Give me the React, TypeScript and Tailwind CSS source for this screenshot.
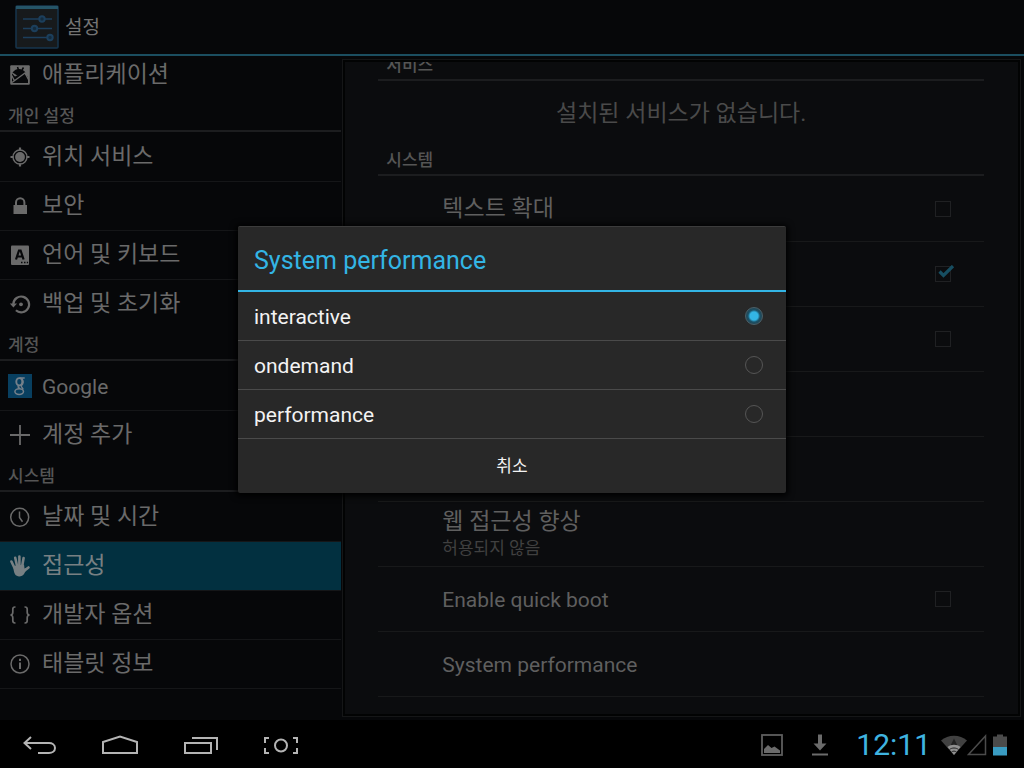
import type { ReactNode } from "react";

const FONT = "font-['Roboto','Noto_Sans_CJK_KR',sans-serif]";

function Svg({ children }: { children: ReactNode }) {
  return (
    <svg viewBox="0 0 24 24" className="size-6 shrink-0" fill="none" stroke="currentColor" strokeWidth="1.5" aria-hidden="true">
      {children}
    </svg>
  );
}

const icons = {
  apps: (
    <Svg>
      <rect x="2.2" y="2.2" width="19.6" height="19.6" rx="1" fill="currentColor" stroke="none" />
      <path d="M4 10.500 7 13.500 15.500 9.500 20 14v6H4z" fill="#07080a" stroke="none" />
      <path d="M4.500 9.500C6.500 7 8.500 6 11 6s5 1.500 6.500 3.500L10 13z" fill="#07080a" stroke="none" />
      <path d="M9.500 4 10.500 7M15.500 4.500 14 7" stroke="#07080a" />
      <path d="M4 19.500 17 10l4 7.500M3.800 12.500l2.700 5.500" strokeWidth="1.400" />
    </Svg>
  ),
  location: (
    <Svg>
      <circle cx="12" cy="12" r="4.900" fill="currentColor" stroke="none" />
      <circle cx="12" cy="12" r="7" strokeWidth="1.400" />
      <path d="M12 2.500v3M12 18.500v3M2.500 12h3M18.500 12h3" strokeWidth="2.200" />
    </Svg>
  ),
  lock: (
    <Svg>
      <rect x="5.500" y="11" width="13.500" height="9" fill="currentColor" stroke="none" />
      <path d="M8 11.500V8.500a4.200 4.200 0 0 1 8.400 0v3" strokeWidth="2" />
    </Svg>
  ),
  language: (
    <Svg>
      <rect x="3" y="2.500" width="18" height="19.500" rx="1" fill="currentColor" stroke="none" />
      <path d="M8 16.500 11 7.500h1.600l3 9M9.300 13.500h5" stroke="#07080a" strokeWidth="2.200" />
      <path d="M13 19.500h1.500M16 19.500h1.500M18.800 19.500h1.300" stroke="#07080a" strokeWidth="1.600" />
    </Svg>
  ),
  backup: (
    <Svg>
      <path d="M5.300 12a7.900 7.900 0 1 1 2.600 6.300" strokeWidth="2.200" />
      <path d="M1.800 11.500h7.200l-3.600 4z" fill="currentColor" stroke="none" />
      <circle cx="13" cy="12.300" r="1.900" fill="currentColor" stroke="none" />
    </Svg>
  ),
  google: (
    <Svg>
      <rect width="24" height="24" fill="#083f60" stroke="none" />
      <g stroke="#75808a">
        <ellipse cx="11.300" cy="7.800" rx="3" ry="3.700" strokeWidth="1.900" />
        <ellipse cx="11.200" cy="17.600" rx="4.300" ry="2.900" strokeWidth="1.500" />
        <path d="M11.500 4h5.200M14 5c1.800 2.500 1 5-.5 6.500-1 1.200 1 2 1.700 4M11 11.300c-2 1.200-.5 2.500 1 3.200" strokeWidth="1.400" />
      </g>
    </Svg>
  ),
  add: (
    <Svg>
      <path d="M12 2v20M2 12h20" strokeWidth="1.800" />
    </Svg>
  ),
  clock: (
    <Svg>
      <circle cx="11.700" cy="12.300" r="9" strokeWidth="1.500" />
      <path d="M11.500 6.500v6l3 4.300" strokeWidth="1.500" />
    </Svg>
  ),
  hand: (
    <Svg>
      <g strokeLinecap="round" strokeWidth="2.600">
        <path d="M3.400 7.500 7 15M7.200 3.800 9.300 13M11.400 2.500V13M15.600 4 14 13M20.500 13.500 16 17" />
      </g>
      <path d="M5.500 12 16 10.500l.5 4 3-1-3.500 6.500c-1.500 2.700-7 3.500-9 .3-1.200-2-1.500-5-1.500-8.300z" fill="currentColor" stroke="none" />
    </Svg>
  ),
  braces: (
    <Svg>
      <path d="M7.500 4H7c-1.700 0-2.200.8-2.200 2.200v3c0 1.700-.6 2.600-2.300 2.800 1.700.2 2.300 1.100 2.300 2.800v3c0 1.400.5 2.200 2.200 2.200h.5M16.500 4h.5c1.700 0 2.200.8 2.200 2.200v3c0 1.700.6 2.600 2.300 2.800-1.700.2-2.300 1.100-2.300 2.800v3c0 1.400-.5 2.200-2.200 2.200h-.5" strokeWidth="1.700" />
    </Svg>
  ),
  info: (
    <Svg>
      <circle cx="12" cy="12" r="9" strokeWidth="1.500" />
      <path d="M12 10.500v6.500M12 6.800v2.200" strokeWidth="2" />
    </Svg>
  ),
};

function Category({ children }: { children: ReactNode }) {
  return (
    <div className="h-[33px] shrink-0 pb-px">
      <h2 className="flex h-8 items-center border-b-2 border-[#1c1d1f] px-2 pt-1 text-[17px] font-medium text-[#555555]">{children}</h2>
    </div>
  );
}

type ItemProps = { icon: keyof typeof icons; label: string; last?: boolean; active?: boolean; latin?: boolean };

function NavItem({ icon, label, last, active, latin }: ItemProps) {
  return (
    <a
      href="#"
      aria-current={active ? "page" : undefined}
      className={`flex h-[49px] shrink-0 items-center gap-2.5 border-b pl-2 ${last ? "border-transparent" : "border-[#151618]"} ${
        active ? "bg-[#023040] text-[#788083]" : "text-[#6a6a6a]"
      }`}
    >
      {icons[icon]}
      <span className={latin ? "pt-1 text-[21px]" : "text-[23px]"}>{label}</span>
    </a>
  );
}

type PrefProps = { title: string; summary?: string; check?: boolean; checked?: boolean; latin?: boolean };

function Preference({ title, summary, check, checked, latin }: PrefProps) {
  return (
    <label className="flex h-[65px] shrink-0 items-center border-b border-[#18191a] pr-[33px] pl-16">
      <span className="flex grow flex-col">
        <span className={`text-[#5f5f5f] ${latin ? "pt-1 text-[21px]" : "text-[23px] leading-7"}`}>{title}</span>
        {summary && <span className="text-[17px] leading-6 text-[#404040]">{summary}</span>}
      </span>
      {check && (
        <span className="relative flex">
          <input type="checkbox" defaultChecked={checked} className="size-4 appearance-none border border-[#202123]" />
          {checked && (
            <svg viewBox="0 0 18 14" className="pointer-events-none absolute -top-px left-[3px] h-[14px] w-[18px]" fill="none" stroke="#174e61" strokeWidth="3.2" aria-hidden="true">
              <path d="M1.500 6.500 5.500 10.500 15 1" />
            </svg>
          )}
        </span>
      )}
    </label>
  );
}

function Governor({ name, checked }: { name: string; checked?: boolean }) {
  return (
    <label className="flex h-[49px] items-center justify-between border-b border-[#4a4a4a] pr-[23px] pl-4 text-[21px] text-[#f3f3f3]">
      <span className="pt-1">{name}</span>
      <input
        type="radio"
        name="governor"
        defaultChecked={checked}
        className="size-[18px] appearance-none rounded-full border border-[#555555] checked:border-[#4b6069] checked:bg-[radial-gradient(circle,#33b5e5_0,#33b5e5_4px,#1b5167_6px,#25414c_9px)]"
      />
    </label>
  );
}

function NavButton({ label, children }: { label: string; children: ReactNode }) {
  return (
    <button type="button" aria-label={label} className="flex h-12 w-20 items-center justify-center">
      <svg viewBox="0 0 40 24" className="h-6 w-10" fill="none" stroke="#b4b4b4" strokeWidth="2" aria-hidden="true">
        {children}
      </svg>
    </button>
  );
}

export default function App() {
  return (
    <div className={`flex h-screen flex-col bg-[#060709] ${FONT}`}>
      <div className="relative flex min-h-0 grow flex-col">
        <header className="flex h-14 shrink-0 items-center gap-1.5 border-b-2 border-[#1b4e60] pl-[15px]">
          <svg viewBox="0 0 44 44" className="size-11" fill="none" aria-hidden="true">
            <rect x="1" y="1" width="42" height="42" rx="1" fill="#171a1c" stroke="#17364d" strokeWidth="1.500" />
            <path d="M1 1h42v3H1z" fill="#255467" />
            <g stroke="#1c3f5c" strokeWidth="1.500">
              <path d="M8 14h29M8 23.500h29M8 32.500h27" />
              <g fill="#142b3d" strokeWidth="2">
                <circle cx="27" cy="14" r="2.700" />
                <circle cx="19.500" cy="23.500" r="2.700" />
                <circle cx="35" cy="32.500" r="2.700" />
              </g>
            </g>
          </svg>
          <h1 className="pt-0.5 text-[19px] text-[#747474]">설정</h1>
        </header>

        <div className="flex min-h-0 grow">
          <nav aria-label="설정" className="w-1/3 overflow-hidden">
            <div className="-mt-[5px] flex flex-col">
              <NavItem icon="apps" label="애플리케이션" last />
              <Category>개인 설정</Category>
              <NavItem icon="location" label="위치 서비스" />
              <NavItem icon="lock" label="보안" />
              <NavItem icon="language" label="언어 및 키보드" />
              <NavItem icon="backup" label="백업 및 초기화" last />
              <Category>계정</Category>
              <NavItem icon="google" label="Google" latin />
              <NavItem icon="add" label="계정 추가" last />
              <Category>시스템</Category>
              <NavItem icon="clock" label="날짜 및 시간" />
              <NavItem icon="hand" label="접근성" active />
              <NavItem icon="braces" label="개발자 옵션" />
              <NavItem icon="info" label="태블릿 정보" />
            </div>
          </nav>

          <main className="mt-[3px] mr-[3px] mb-[3px] ml-px flex grow flex-col overflow-hidden border border-[#151617] bg-[#020303] p-0.5">
            <div className="flex grow flex-col overflow-hidden bg-[#0b0c0e] pr-[34px] pl-[33px]">
              <div className="-mt-[13px] flex flex-col">
                <Category>서비스</Category>
                <p className="flex h-[62px] items-center justify-center pt-0.5 text-[23px] text-[#4a4a4a]">설치된 서비스가 없습니다.</p>
                <Category>시스템</Category>
                <Preference title="텍스트 확대" check />
                <Preference title="" check checked />
                <Preference title="" check />
                <Preference title="" />
                <Preference title="" />
                <Preference title="웹 접근성 향상" summary="허용되지 않음" />
                <Preference title="Enable quick boot" check latin />
                <Preference title="System performance" latin />
              </div>
            </div>
          </main>
        </div>

        <div className="absolute inset-0 flex items-center justify-center pb-px">
          <section role="dialog" aria-labelledby="dialog-title" className="w-[548px] rounded-xs border-t border-[#3c3c3c] bg-[#282828] shadow-[0_1px_6px_2px_#000000]">
            <h2 id="dialog-title" className="flex h-[65px] items-center border-b-2 border-[#33b5e5] px-4 pt-1 text-[25px] text-[#33b5e5]">
              System performance
            </h2>
            <Governor name="interactive" checked />
            <Governor name="ondemand" />
            <Governor name="performance" />
            <button type="button" className="h-[54px] w-full pt-0.5 text-[17px] text-[#f3f3f3]">
              취소
            </button>
          </section>
        </div>
      </div>

      <footer className="flex h-12 shrink-0 items-center bg-black pt-0.5">
        <NavButton label="뒤로">
          <path d="M11 4 4.500 10 11 16M5 10h24c3 0 6 1.500 6 5s-3 5-6 5H18" />
        </NavButton>
        <NavButton label="홈">
          <path d="M3 20V9L20 3.500 37 9v11z" />
        </NavButton>
        <NavButton label="최근 앱">
          <path d="M5 10h26v10H5zM12 5h25v12" />
        </NavButton>
        <NavButton label="스크린샷">
          <path d="M9 5H5v5M5 15v5h4M33 5h4v5M37 15v5h-4" />
          <circle cx="21" cy="12.500" r="6" />
        </NavButton>
        <div className="ml-auto flex items-center pr-[17px]">
          <svg viewBox="0 0 24 24" className="mr-6 size-6" aria-hidden="true">
            <rect x="2" y="2" width="20" height="20" fill="none" stroke="#5e5e5e" strokeWidth="1.800" />
            <path d="M4 20v-4l4-4 3.500 3 3-1.500 5.500 4V20z" fill="#6b6b6b" />
          </svg>
          <svg viewBox="0 0 24 24" className="mr-6 size-6" fill="#6b6b6b" aria-hidden="true">
            <path d="M10 1.500h4v9h4.500L12 17.500 5.500 10.500H10zM4 20.500h16v2H4z" />
          </svg>
          <time className="mr-2.5 text-[30px] leading-none text-[#3fb4e0]">12:11</time>
          <svg viewBox="0 0 26 20" className="h-5 w-[26px]" aria-hidden="true">
            <path d="M0 5.500C7 -1 19 -1 26 5.500L13 20z" fill="#414141" />
            <path d="M13 3.500 9.500 10.500h7z" fill="#222222" />
            <path d="M6.500 12c3.500-3 9.500-3 13 0L13 20z" fill="#909090" />
            <path d="M8.500 14.500c2.500-2 6.500-2 9 0M10.500 17c1.500-1.200 3.500-1.200 5 0" fill="none" stroke="#222222" />
          </svg>
          <svg viewBox="0 0 20 22" className="mr-1.5 h-[22px] w-5" fill="none" stroke="#4b4b4b" strokeWidth="1.500" aria-hidden="true">
            <path d="M18.500 2v18.500H1.500z" />
          </svg>
          <svg viewBox="0 0 14 22" className="h-[22px] w-3.5" aria-hidden="true">
            <path d="M4 .500h6v2h4V13H0V2.500h4z" fill="#4b4b4b" />
            <path d="M0 13h14v8.500H0z" fill="#3a9cc2" />
          </svg>
        </div>
      </footer>
    </div>
  );
}
